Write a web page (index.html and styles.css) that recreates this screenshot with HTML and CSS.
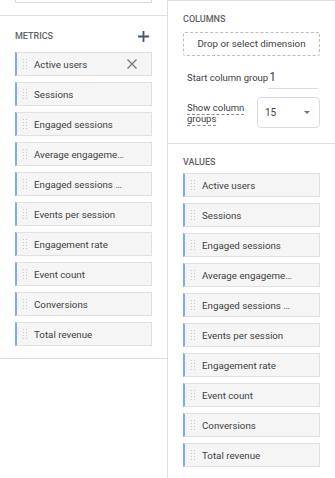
FILE: index.html
```html
<!DOCTYPE html>
<html lang="en">
<head>
    <meta charset="UTF-8">
    <meta name="viewport" content="width=device-width, initial-scale=1.0">
    <title>Pivot table setup</title>
    <link rel="stylesheet" href="styles.css">
</head>
<body>

    <div class="editor">
        <!-- Left panel: dimensions above, metrics list -->
        <div class="panel panel-left">
            <div class="prev-section">
                <div class="prev-card"></div>
            </div>

            <div class="section metrics-section">
                <div class="section-head">
                    <span class="section-title">Metrics</span>
                    <svg class="add-icon" width="11" height="11" viewBox="0 0 11 11">
                        <path d="M5.5 0v11M0 5.5h11" stroke="#46566a" stroke-width="1.8" fill="none"/>
                    </svg>
                </div>
                <ul class="chip-list">
                    <li class="chip">
                        <span class="handle"></span>
                        <span class="chip-label">Active users</span>
                        <svg class="close-icon" width="10" height="10" viewBox="0 0 10 10">
                            <path d="M0.5 0.5l9 9M9.5 0.5l-9 9" stroke="#777" stroke-width="1.3" fill="none"/>
                        </svg>
                    </li>
                    <li class="chip"><span class="handle"></span><span class="chip-label">Sessions</span></li>
                    <li class="chip"><span class="handle"></span><span class="chip-label">Engaged sessions</span></li>
                    <li class="chip"><span class="handle"></span><span class="chip-label">Average engagement time</span></li>
                    <li class="chip"><span class="handle"></span><span class="chip-label">Engaged sessions per user</span></li>
                    <li class="chip"><span class="handle"></span><span class="chip-label">Events per session</span></li>
                    <li class="chip"><span class="handle"></span><span class="chip-label">Engagement rate</span></li>
                    <li class="chip"><span class="handle"></span><span class="chip-label">Event count</span></li>
                    <li class="chip"><span class="handle"></span><span class="chip-label">Conversions</span></li>
                    <li class="chip"><span class="handle"></span><span class="chip-label">Total revenue</span></li>
                </ul>
            </div>
        </div>

        <!-- Right panel: columns + values -->
        <div class="panel panel-right">
            <div class="section columns-section">
                <div class="section-head">
                    <span class="section-title">Columns</span>
                </div>
                <div class="drop-zone">Drop or select dimension</div>

                <div class="field-row start-row">
                    <span class="field-label">Start column group</span>
                    <span class="text-input">1</span>
                </div>

                <div class="field-row groups-row">
                    <span class="field-label tip-label">Show column groups</span>
                    <div class="select-box">
                        <span class="select-value">15</span>
                        <span class="caret"></span>
                    </div>
                </div>
            </div>

            <div class="section values-section">
                <div class="section-head">
                    <span class="section-title">Values</span>
                </div>
                <ul class="chip-list">
                    <li class="chip"><span class="handle"></span><span class="chip-label">Active users</span></li>
                    <li class="chip"><span class="handle"></span><span class="chip-label">Sessions</span></li>
                    <li class="chip"><span class="handle"></span><span class="chip-label">Engaged sessions</span></li>
                    <li class="chip"><span class="handle"></span><span class="chip-label">Average engagement time</span></li>
                    <li class="chip"><span class="handle"></span><span class="chip-label">Engaged sessions per user</span></li>
                    <li class="chip"><span class="handle"></span><span class="chip-label">Events per session</span></li>
                    <li class="chip"><span class="handle"></span><span class="chip-label">Engagement rate</span></li>
                    <li class="chip"><span class="handle"></span><span class="chip-label">Event count</span></li>
                    <li class="chip"><span class="handle"></span><span class="chip-label">Conversions</span></li>
                    <li class="chip"><span class="handle"></span><span class="chip-label">Total revenue</span></li>
                </ul>
            </div>
        </div>
    </div>

</body>
</html>
```

FILE: styles.css
```css
body, html {
    margin: 0;
    width: 100%;
    height: 100%;
    font-family: Roboto, "Liberation Sans", Arial, sans-serif;
    background: #ffffff;
    color: #3c4043;
}

.editor {
    display: flex;
    width: 100%;
    height: 100%;
}

.panel {
    box-sizing: border-box;
    height: 100%;
}

.panel-left {
    width: 168px;
    flex: none;
    border-right: 1px solid #e0e0e0;
}

.panel-right {
    flex: 1;
    min-width: 0;
    border-top: 1px solid #e0e0e0;
}

/* bottom edge of the dimensions card that scrolled off */
.prev-section {
    height: 15px;
    border-bottom: 1px solid #e0e0e0;
}

.prev-card {
    height: 2px;
    margin: 0 15px;
    border: 1px solid #dadce0;
    border-top: none;
}

.section {
    padding: 0 15px;
}

.metrics-section {
    padding-top: 14px;
    padding-bottom: 12px;
    border-bottom: 1px solid #e0e0e0;
}

.section-head {
    display: flex;
    align-items: center;
    justify-content: space-between;
    height: 12px;
}

.section-title {
    font-size: 9px;
    font-weight: 500;
    text-transform: uppercase;
    color: #5f6368;
    line-height: 12px;
}

.add-icon {
    margin-right: 3px;
    margin-top: 1px;
}

.metrics-section .section-head {
    margin-bottom: 10px;
}

/* Chips */
.chip-list {
    list-style: none;
    margin: 0;
    padding: 0;
    display: flex;
    flex-direction: column;
    gap: 6px;
}

.chip {
    box-sizing: border-box;
    height: 24px;
    display: flex;
    align-items: center;
    background: #f5f5f5;
    border: 1px solid #e0e0e0;
    border-left: 2px solid #7baaf7;
    padding: 0 26px 0 5px;
    position: relative;
}

.handle {
    flex: none;
    width: 6px;
    height: 12px;
    margin-right: 6px;
    background-image: radial-gradient(circle, #c8c8c8 0.8px, transparent 1px);
    background-size: 3px 3px;
}

.chip-label {
    flex: 1;
    min-width: 0;
    font-size: 9.75px;
    color: #3c4043;
    white-space: nowrap;
    overflow: hidden;
    text-overflow: ellipsis;
}

.close-icon {
    position: absolute;
    right: 14px;
    top: 6px;
}

/* Columns section */
.columns-section {
    padding-top: 12px;
    padding-bottom: 15px;
    border-bottom: 1px solid #e0e0e0;
}

.columns-section .section-head {
    margin-bottom: 7px;
}

.drop-zone {
    box-sizing: border-box;
    height: 24px;
    line-height: 22px;
    text-align: center;
    font-size: 9.75px;
    color: #3c4043;
    border: 1px dashed #bdbdbd;
    border-radius: 2px;
}

.field-row {
    display: flex;
    align-items: center;
    padding-left: 4px;
}

.field-label {
    font-size: 9.5px;
    color: #3c4043;
}

.start-row {
    margin-top: 10px;
    height: 23px;
}

.start-row .field-label {
    flex: none;
    white-space: nowrap;
}

.text-input {
    box-sizing: border-box;
    width: 52px;
    height: 23px;
    margin-left: auto;
    margin-right: 2px;
    line-height: 22px;
    font-size: 12px;
    padding-left: 1px;
    color: #3c4043;
    border-bottom: 1px solid #dadce0;
}

.groups-row {
    margin-top: 8px;
}

.tip-label {
    width: 70px;
    flex: none;
    line-height: 11px;
    text-decoration: underline dashed #8a8a8a;
    text-underline-offset: 3px;
}

.select-box {
    box-sizing: border-box;
    width: 63px;
    height: 31px;
    display: flex;
    align-items: center;
    justify-content: space-between;
    padding: 0 9px 0 7px;
    border: 1px solid #dadce0;
    border-radius: 4px;
}

.select-value {
    font-size: 10px;
    color: #3c4043;
}

.caret {
    width: 0;
    height: 0;
    border-left: 3px solid transparent;
    border-right: 3px solid transparent;
    border-top: 3px solid #757575;
}

/* Values section */
.values-section {
    padding-top: 12px;
}

.values-section .section-head {
    margin-bottom: 5px;
}
```
